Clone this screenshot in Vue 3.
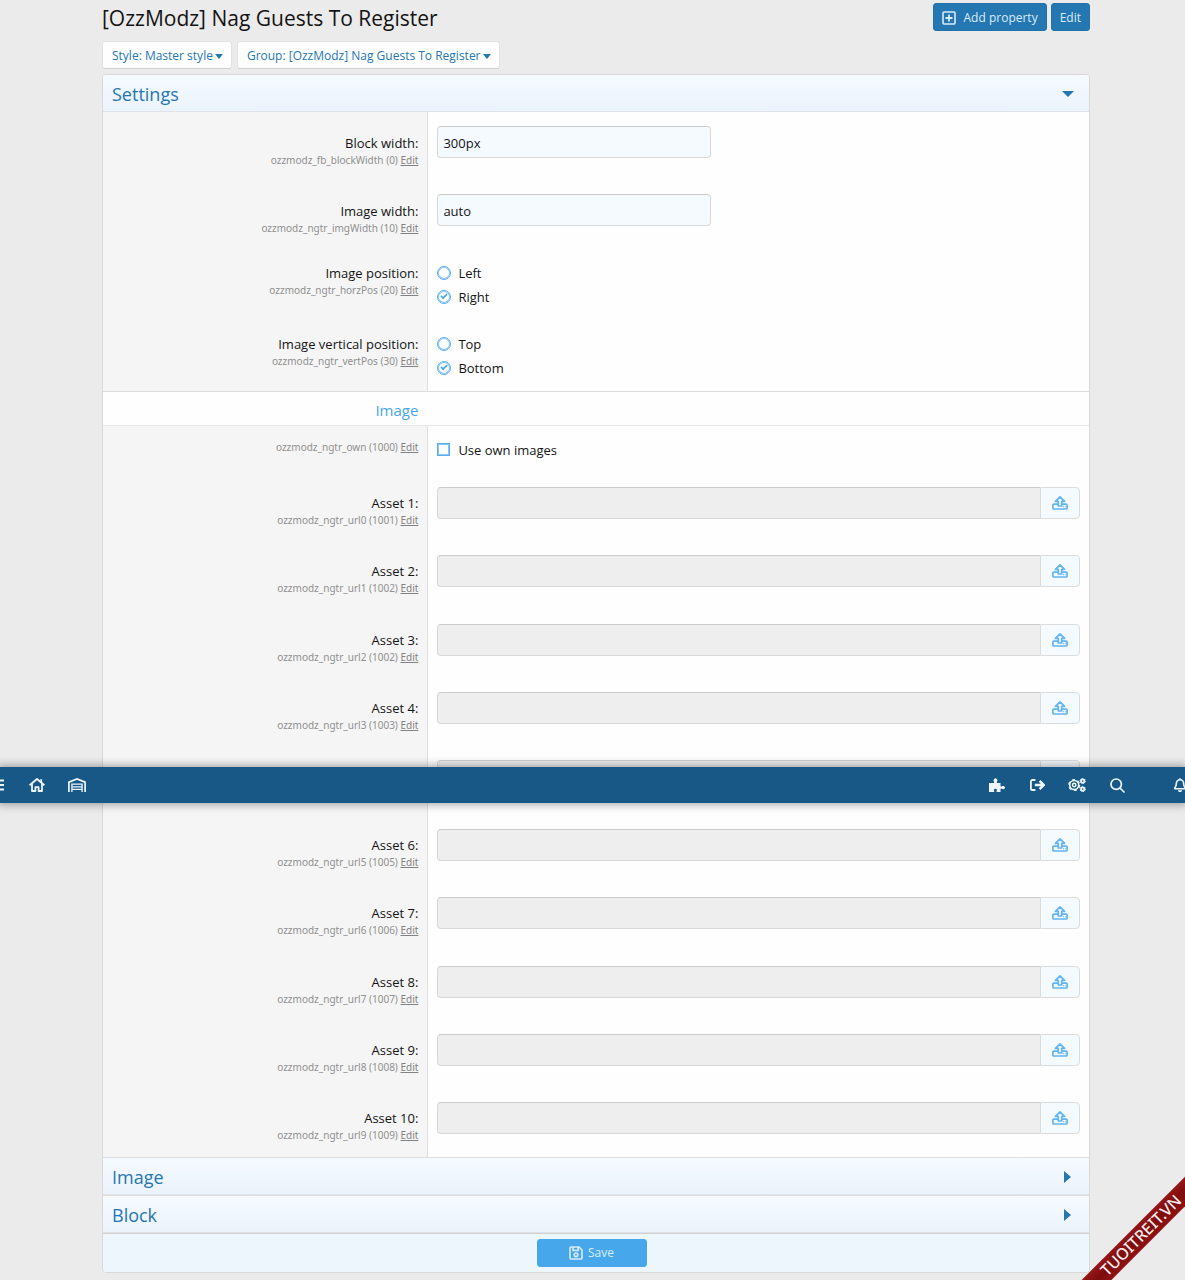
<script setup>
import { ref } from 'vue'

const textRows = ref([
  { id: 'blockWidth', label: 'Block width:', hint: 'ozzmodz_fb_blockWidth (0)', value: '300px' },
  { id: 'imgWidth', label: 'Image width:', hint: 'ozzmodz_ngtr_imgWidth (10)', value: 'auto' },
])

const radioRows = ref([
  { id: 'horzPos', label: 'Image position:', hint: 'ozzmodz_ngtr_horzPos (20)', options: ['Left', 'Right'], value: 'Right' },
  { id: 'vertPos', label: 'Image vertical position:', hint: 'ozzmodz_ngtr_vertPos (30)', options: ['Top', 'Bottom'], value: 'Bottom' },
])

const orders = [1001, 1002, 1002, 1003, 1004, 1005, 1006, 1007, 1008, 1009]
const assets = orders.map((order, i) => ({
  id: `asset${i}`,
  label: `Asset ${i + 1}:`,
  hint: `ozzmodz_ngtr_url${i} (${order})`,
}))

const useOwn = ref(false)
</script>

<template>
  <div class="page">
    <main class="content">
      <header class="title-bar">
        <h1>[OzzModz] Nag Guests To Register</h1>
        <div class="actions">
          <button type="button" class="btn">
            <svg width="14" height="14" viewBox="0 0 14 14" fill="none" stroke="currentColor">
              <rect x="1" y="1" width="12" height="12" rx="1" stroke-width="1.6" />
              <path d="M7 3.5v7M3.5 7h7" stroke-width="1.8" />
            </svg>
            Add property
          </button>
          <button type="button" class="btn">Edit</button>
        </div>
      </header>

      <div class="filters">
        <button type="button" class="filter">Style: Master style<i class="caret small"></i></button>
        <button type="button" class="filter">Group: [OzzModz] Nag Guests To Register<i class="caret small"></i></button>
      </div>

      <form class="block" @submit.prevent>
        <button type="button" class="section first">Settings<i class="caret"></i></button>

        <div v-for="row in textRows" :key="row.id" class="row text-row">
          <div class="side">
            <label :for="row.id">{{ row.label }}</label>
            <div class="hint">{{ row.hint }} <a href="#">Edit</a></div>
          </div>
          <div class="field">
            <input :id="row.id" v-model="row.value" type="text" class="input" />
          </div>
        </div>

        <div v-for="row in radioRows" :key="row.id" class="row choices" role="radiogroup" :aria-labelledby="row.id">
          <div class="side">
            <span :id="row.id" class="label">{{ row.label }}</span>
            <div class="hint">{{ row.hint }} <a href="#">Edit</a></div>
          </div>
          <div class="field">
            <label v-for="option in row.options" :key="option" class="choice">
              <input v-model="row.value" type="radio" :name="row.id" :value="option" />{{ option }}
            </label>
          </div>
        </div>

        <h3 class="sub-header"><span>Image</span></h3>

        <div class="row choices">
          <div class="side">
            <div class="hint">ozzmodz_ngtr_own (1000) <a href="#">Edit</a></div>
          </div>
          <div class="field">
            <label class="choice"><input v-model="useOwn" type="checkbox" />Use own images</label>
          </div>
        </div>

        <div v-for="asset in assets" :key="asset.id" class="row">
          <div class="side">
            <label :for="asset.id">{{ asset.label }}</label>
            <div class="hint">{{ asset.hint }} <a href="#">Edit</a></div>
          </div>
          <div class="field">
            <div class="upload">
              <input :id="asset.id" type="text" class="input" disabled />
              <button type="button" aria-label="Upload">
                <svg width="16" height="14" viewBox="0 0 16 14" fill="none" stroke="currentColor" stroke-width="1.7" stroke-linejoin="round">
                  <path d="M6.3 10V5.400H3.400L8 .9l4.600 4.500H9.700V10z" />
                  <path d="M6.200 8.100H1.900a1 1 0 0 0-1 1V12a1 1 0 0 0 1 1h12.200a1 1 0 0 0 1-1V9.100a1 1 0 0 0-1-1H9.800" />
                  <path d="M11.200 10.700h.8M12.900 10.700h.8" stroke-width="1.200" />
                </svg>
              </button>
            </div>
          </div>
        </div>

        <button type="button" class="section">Image<i class="caret right"></i></button>
        <button type="button" class="section">Block<i class="caret right"></i></button>

        <div class="submit-row">
          <button type="submit" class="btn save">
            <svg width="14" height="14" viewBox="0 0 14 14" fill="none" stroke="currentColor" stroke-width="1.600">
              <path d="M1 2a1 1 0 0 1 1-1h8l3 3v8a1 1 0 0 1-1 1H2a1 1 0 0 1-1-1z" />
              <path d="M4 1v3.500h5.200V1" />
              <circle cx="7" cy="8.800" r="1.800" />
            </svg>
            Save
          </button>
        </div>
      </form>
    </main>

    <nav class="nav">
      <div class="nav-group start">
        <a href="#" aria-label="Menu">
          <svg width="14" height="14" viewBox="0 0 14 14" fill="none" stroke="currentColor" stroke-width="1.800">
            <path d="M0 2.500h14M0 7h14M0 11.500h14" />
          </svg>
        </a>
        <a href="#" aria-label="Home">
          <svg width="16" height="14" viewBox="0 0 16 14" fill="none" stroke="currentColor" stroke-width="1.800" stroke-linejoin="round">
            <path d="M.6 7.200L8 1l7.400 6.200" />
            <path d="M12.200 4.200V1.200" />
            <path d="M3 6v7h3.400V9.200h3.200V13H13V6" />
          </svg>
        </a>
        <a href="#" aria-label="Warehouse">
          <svg width="18" height="14" viewBox="0 0 18 14" fill="none" stroke="currentColor" stroke-width="1.700">
            <path d="M.9 14V4.200L9 1l8.100 3.200V14" />
            <path d="M3.900 14V6.200h10.200V14M4 8.800h10M4 11.400h10" stroke-width="1.300" />
          </svg>
        </a>
      </div>
      <div class="nav-group end">
        <a href="#" aria-label="Add-ons">
          <svg width="16" height="14" viewBox="0 0 16 14" fill="currentColor">
            <path d="M0 5h4.600c.6 0 .8-.5.4-1C4.100 2.700 4.700.3 6.500.3S8.900 2.700 8 4c-.4.500-.2 1 .4 1h3.100v2.800c0 .7.500 1 1.100.6 1.300-.9 3.400-.4 3.400 1.200s-2.100 2.100-3.400 1.200c-.6-.4-1.100-.1-1.100.6V14H8c-.5 0-.7-.5-.4-.9.7-1 .2-2.300-1.200-2.300s-1.900 1.300-1.200 2.300c.3.400.1.900-.4.900H0z" />
          </svg>
        </a>
        <a href="#" aria-label="Log out">
          <svg width="15" height="12" viewBox="0 0 15 12" fill="none" stroke="currentColor" stroke-width="1.800">
            <path d="M5.400 1H2.500A1.600 1.600 0 0 0 .9 2.600v6.800A1.600 1.600 0 0 0 2.500 11h2.900" />
            <path d="M4.800 6h8.400M9.600 1.900L13.700 6l-4.100 4.100" stroke-width="2.400" />
          </svg>
        </a>
        <a href="#" aria-label="Options">
          <svg width="18" height="14" viewBox="0 0 18 14" fill="none" stroke="currentColor">
            <circle cx="6.200" cy="7" r="4.500" stroke-width="1.600" />
            <circle cx="6.200" cy="7" r="5.500" stroke-width="1.200" stroke-dasharray="3 2.760" />
            <circle cx="6.200" cy="7" r="1.700" stroke-width="1.500" />
            <circle cx="14.700" cy="3" r="1.700" stroke-width="1.700" />
            <circle cx="14.700" cy="3" r="2.600" stroke-width="1" stroke-dasharray="1.500 1.220" />
            <circle cx="14.700" cy="11" r="1.700" stroke-width="1.700" />
            <circle cx="14.700" cy="11" r="2.600" stroke-width="1" stroke-dasharray="1.500 1.220" />
          </svg>
        </a>
        <a href="#" aria-label="Search">
          <svg width="15" height="15" viewBox="0 0 15 15" fill="none" stroke="currentColor" stroke-width="1.700" stroke-linecap="round">
            <circle cx="6.200" cy="6.200" r="5.200" />
            <path d="M10 10l4 4" />
          </svg>
        </a>
        <a href="#" class="alerts" aria-label="Alerts">
          <svg width="12" height="14" viewBox="0 0 12 14" fill="none" stroke="currentColor" stroke-width="1.600" stroke-linejoin="round">
            <path d="M6 .2v1.600M6 1.800c-2.400 0-3.700 1.700-3.700 4 0 2.600-.7 3.300-1.500 4.100v.9h10.400v-.9c-.8-.8-1.500-1.500-1.500-4.100 0-2.300-1.300-4-3.700-4z" />
            <path d="M4.600 12.300c.3 1.300 2.500 1.300 2.800 0" />
          </svg>
        </a>
      </div>
    </nav>

    <div class="corner"><span class="ribbon">TUOITREIT.VN</span></div>
  </div>
</template>

<style>
body {
  margin: 0;
  background: #ebebeb;
}
</style>

<style scoped>
.page {
  position: relative;
  overflow: hidden;
  font-family: "Open Sans", "Noto Sans", sans-serif;
  font-size: 13px;
  line-height: 20px;
  color: #141414;
}
.page * {
  box-sizing: border-box;
}
button,
input {
  font: inherit;
  color: inherit;
  margin: 0;
}
button {
  cursor: pointer;
}
svg {
  flex: none;
}
.content {
  padding: 3px 95px 7px 102px;
}

.title-bar {
  display: flex;
  justify-content: space-between;
  align-items: center;
  height: 28px;
}
h1 {
  margin: 0;
  font-size: 21px;
  line-height: 30px;
  padding-top: 1px;
  font-weight: 400;
}
.actions {
  display: flex;
  gap: 4px;
}
.btn {
  display: flex;
  align-items: center;
  justify-content: center;
  gap: 8px;
  height: 28px;
  padding: 1px 8px 0;
  border: 1px solid #2171ab;
  border-radius: 3px;
  background: #2577b1;
  color: #d9ecf9;
  font-size: 12px;
}

.filters {
  display: flex;
  gap: 5px;
  padding: 10px 0 5px;
}
.filter {
  display: flex;
  align-items: center;
  gap: 2px;
  height: 28px;
  padding: 2px 8px 0 9px;
  border: 1px solid #e2e2e2;
  border-bottom-color: #d0d0d0;
  border-radius: 3px;
  background: #fefefe;
  color: #2577b1;
  font-size: 12px;
}
.caret {
  border: 6px solid transparent;
  border-top-color: #2577b1;
  border-bottom: 0;
}
.caret.small {
  border-width: 5px 4px 0;
}
.caret.right {
  border: 6px solid transparent;
  border-left: 7px solid #2577b1;
  border-right: 0;
  margin-right: 3px;
}

.block {
  border: 1px solid #d8d8d8;
  border-radius: 4px;
  background: #fefefe;
  overflow: hidden;
}
.section {
  display: flex;
  justify-content: space-between;
  align-items: center;
  width: 100%;
  height: 38px;
  padding: 2px 15px 0 9px;
  border: 0;
  border-top: 1px solid #dfdfdf;
  border-bottom: 1px solid #dfe3e8;
  background: linear-gradient(#f5faff, #ebf3fc);
  color: #2577b1;
  font-size: 18px;
}
.section.first {
  height: 37px;
  border-top: 0;
}

.row {
  display: flex;
}
.side {
  width: 33%;
  padding: 20px 9px 13px;
  border-right: 1px solid #dfdfdf;
  background: #f5f5f5;
  text-align: right;
}
.text-row .side {
  padding-top: 21px;
  padding-bottom: 12px;
}
.side label,
.label {
  display: block;
}
.hint {
  font-family: "Noto Sans", sans-serif;
  font-size: 10px;
  line-height: 1.54;
  color: #909090;
}
.hint a {
  color: #828282;
  text-decoration: underline;
}
.field {
  flex: 1;
  padding: 14px 9px 0;
}
.input {
  display: block;
  width: 274px;
  height: 32px;
  padding: 2px 5px 0;
  border: 1px solid #d8d8d8;
  border-top-color: #cbcbcb;
  border-radius: 4px;
  background: #f5faff;
}
.upload {
  display: flex;
}
.upload .input {
  flex: 1;
  border-right-width: 0;
  border-radius: 4px 0 0 4px;
  background: #eeeeee;
}
.upload button {
  display: flex;
  align-items: center;
  justify-content: center;
  width: 40px;
  height: 32px;
  padding: 0;
  border: 1px solid #dcdcdc;
  border-radius: 0 4px 4px 0;
  background: #f5faff;
  color: #63b4f1;
}

.choices .side {
  padding-top: 14px;
}
.choices .field {
  display: flex;
  flex-direction: column;
  align-items: flex-start;
  gap: 4px;
  padding-bottom: 13px;
}
.choice {
  display: flex;
  align-items: center;
  gap: 7px;
}
.choice input {
  appearance: none;
  display: flex;
  align-items: center;
  justify-content: center;
  width: 14px;
  height: 14px;
  border: 1px solid #58aef0;
  box-shadow: inset 0 0 0 1px #8ac6f5;
}
.choice input[type="radio"] {
  border-radius: 50%;
}
.choice input[type="checkbox"] {
  width: 13px;
  height: 13px;
  margin-right: 1px;
}
.choice input:checked::after {
  content: "";
  width: 6px;
  height: 3px;
  margin-bottom: 2px;
  box-sizing: content-box;
  border: solid #47a7eb;
  border-width: 0 0 2px 2px;
  transform: rotate(-45deg) scale(0.8);
}

.sub-header {
  height: 35px;
  margin: 0;
  border-top: 1px solid #dcdcdc;
  border-bottom: 1px solid #e8e8e8;
  font-size: 15px;
  line-height: 36px;
  font-weight: 400;
  color: #47a7eb;
}
.sub-header span {
  display: block;
  width: 33%;
  padding-right: 10px;
  text-align: right;
}

.submit-row {
  display: flex;
  justify-content: center;
  padding: 5px 9px 5px 0;
  border-top: 1px solid #d0d0d0;
  background: #edf5fd;
}
.save {
  width: 110px;
  gap: 5px;
  border-color: #47a7eb;
  background: #47a7eb;
}

.nav {
  position: absolute;
  top: 767px;
  left: 0;
  right: 0;
  display: flex;
  justify-content: space-between;
  height: 36px;
  background: #185886;
  box-shadow: 0 0 8px 2px rgba(20, 20, 20, 0.35);
  color: #edf6fd;
}
.nav-group {
  display: flex;
}
.nav-group.start {
  margin-left: -23px;
}
.nav-group.end {
  margin-right: -15px;
}
.nav a {
  display: flex;
  align-items: center;
  justify-content: center;
  width: 40px;
  color: inherit;
}
.nav .alerts {
  margin-left: 23px;
}

.corner {
  position: absolute;
  right: 0;
  bottom: 0;
  display: flex;
  align-items: center;
  justify-content: center;
  width: 88px;
  height: 88px;
}
.ribbon {
  flex: none;
  width: 200px;
  background: linear-gradient(#971616, #7d0c0c 50%, #8f1414);
  color: #f4eaea;
  font-family: "Noto Sans", sans-serif;
  font-size: 16px;
  font-weight: 500;
  line-height: 21px;
  text-align: center;
  transform: rotate(-45deg);
}
</style>
